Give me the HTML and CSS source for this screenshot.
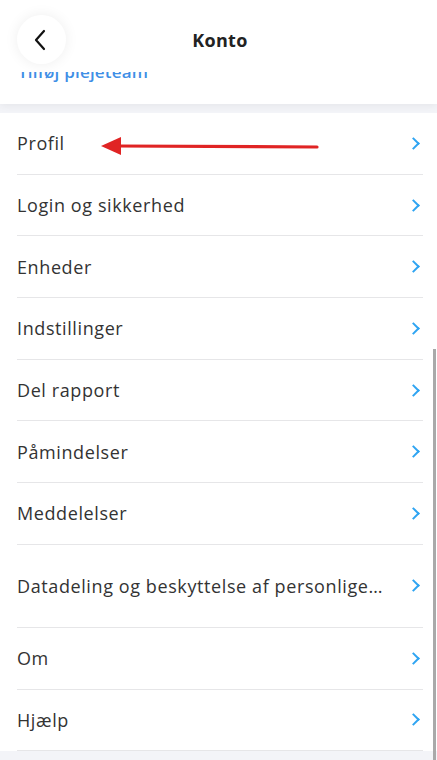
FILE: index.html
```html
<!DOCTYPE html>
<html lang="da">
<head>
    <meta charset="UTF-8">
    <meta name="viewport" content="width=device-width, initial-scale=1.0">
    <title>Konto</title>
    <link rel="stylesheet" href="styles.css">
</head>
<body>

<div class="header">
    <div class="topbar">
        <button class="back" aria-label="Tilbage">
            <svg width="14" height="22" viewBox="0 0 14 22">
                <path d="M11 2 L3 11 L11 20" fill="none" stroke="#111" stroke-width="2.2" stroke-linecap="round" stroke-linejoin="round"/>
            </svg>
        </button>
        <h1 class="title">Konto</h1>
    </div>
    <div class="peek">
        <span>Tilføj plejeteam</span>
    </div>
</div>

<ul class="menu">
    <li class="row"><span>Profil</span><i class="chev"></i></li>
    <li class="row"><span>Login og sikkerhed</span><i class="chev"></i></li>
    <li class="row"><span>Enheder</span><i class="chev"></i></li>
    <li class="row"><span>Indstillinger</span><i class="chev"></i></li>
    <li class="row"><span>Del rapport</span><i class="chev"></i></li>
    <li class="row"><span>Påmindelser</span><i class="chev"></i></li>
    <li class="row"><span>Meddelelser</span><i class="chev"></i></li>
    <li class="row tall"><span>Datadeling og beskyttelse af personlige…</span><i class="chev"></i></li>
    <li class="row"><span>Om</span><i class="chev"></i></li>
    <li class="row"><span>Hjælp</span><i class="chev"></i></li>
</ul>

<!-- annotation arrow pointing at Profil -->
<svg class="arrow" width="220" height="22" viewBox="0 0 220 22">
    <path d="M16 11 L216 12" stroke="#e02424" stroke-width="3.2" stroke-linecap="round"/>
    <path d="M0 11 L20 2 L20 20 Z" fill="#e02424"/>
</svg>

<div class="scrollbar"></div>

</body>
</html>
```

FILE: styles.css
```css
body {
    margin: 0;
    background-color: #f3f4f8;
    font-family: "Open Sans", Arial, sans-serif;
    color: #333;
}
.header {
    background-color: #fff;
    height: 104px;
    box-shadow: 0 2px 8px rgba(0, 0, 0, 0.06);
    position: relative;
}
.topbar {
    display: flex;
    align-items: center;
    padding: 15px 17px 0;
    height: 49px;
}
.back {
    width: 49px;
    height: 49px;
    border-radius: 50%;
    border: none;
    background-color: #fff;
    box-shadow: 0 0 14px rgba(0, 0, 0, 0.07);
    display: flex;
    align-items: center;
    justify-content: center;
    padding: 0 3px 0 0;
}
.title {
    flex: 1;
    margin: 0 46px 0 0;
    text-align: center;
    font-size: 18px;
    font-weight: 700;
    color: #222;
    letter-spacing: 0.3px;
}
.peek {
    margin-top: 8px;
    height: 32px;
    overflow: hidden;
    padding-left: 18px;
}
.peek span {
    display: block;
    margin-top: -10px;
    font-size: 17px;
    line-height: 20px;
    font-weight: 600;
    color: #3f8fe6;
    letter-spacing: 0.2px;
}
.menu {
    list-style: none;
    margin: 9px 0 0;
    padding: 0 0 0 17px;
    background-color: #fff;
}
.row {
    display: flex;
    align-items: center;
    justify-content: space-between;
    height: 60.7px;
    margin-right: 14px;
    border-bottom: 1px solid #e6e6e8;
    font-size: 18px;
    letter-spacing: 0.6px;
}
.row span {
    white-space: nowrap;
    overflow: hidden;
    text-overflow: ellipsis;
    padding-right: 20px;
}
.row.tall {
    height: 82px;
}
.chev {
    flex: none;
    width: 7px;
    height: 7px;
    margin-right: 5px;
    border-top: 2px solid #2ea4f2;
    border-right: 2px solid #2ea4f2;
    transform: rotate(45deg);
}
.arrow {
    position: absolute;
    left: 101px;
    top: 135px;
}
.scrollbar {
    position: fixed;
    right: 1px;
    top: 349px;
    width: 3px;
    height: 411px;
    background-color: #a9a9a9;
}
```
